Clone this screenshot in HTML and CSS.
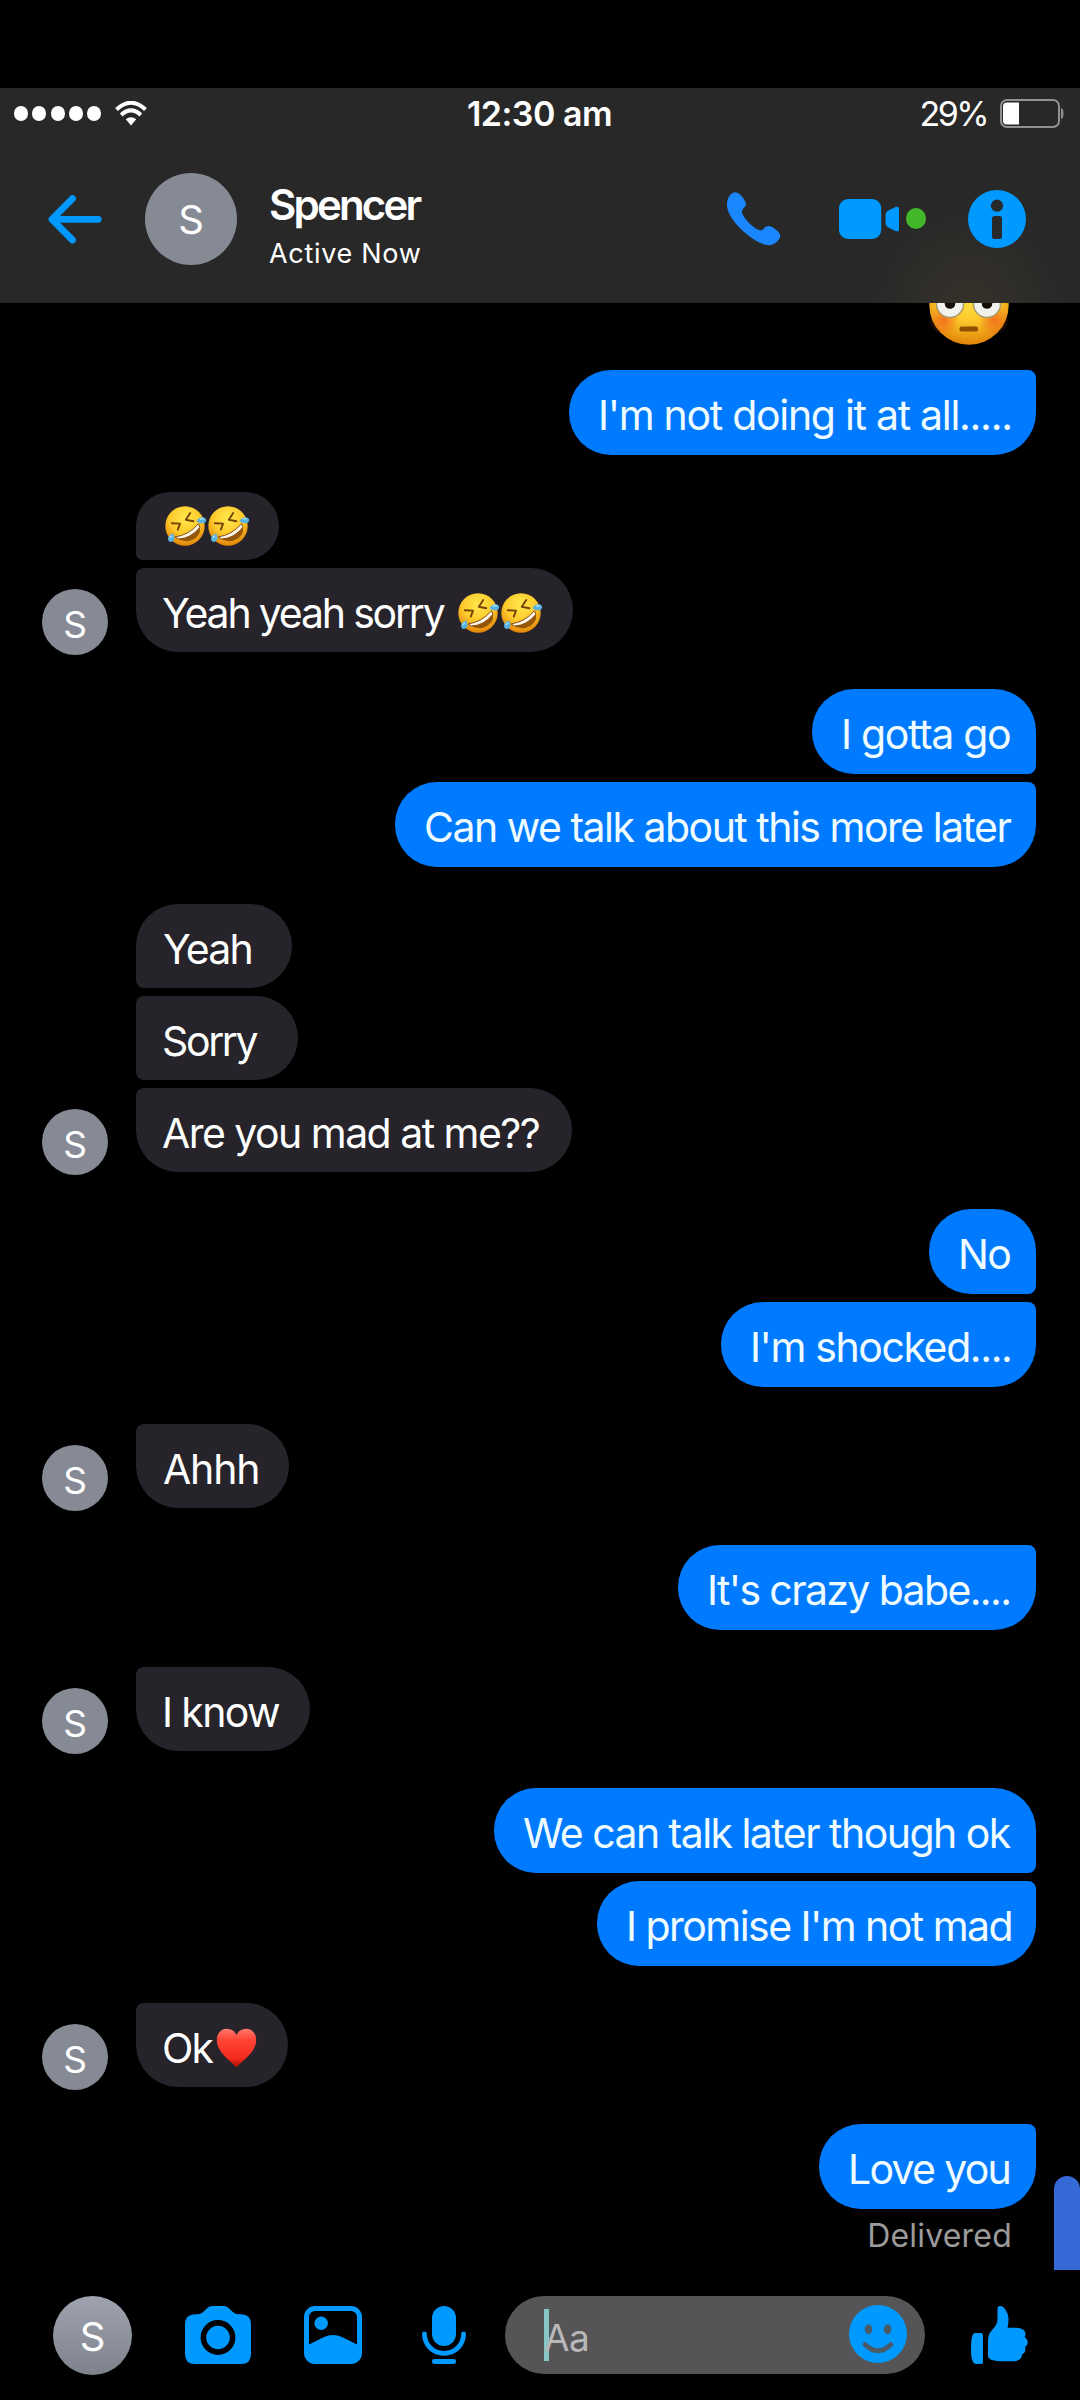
FILE: index.html
```html
<!DOCTYPE html>
<html lang="en">
<head>
<meta charset="utf-8">
<title>Spencer</title>
<link rel="stylesheet" href="styles.css">
</head>
<body>
<svg class="defs" aria-hidden="true">
  <defs>
    <radialGradient id="face" cx=".5" cy=".3" r=".72">
      <stop offset="0" stop-color="#ffe94e"/><stop offset=".55" stop-color="#fdc92b"/><stop offset="1" stop-color="#e07f06"/>
    </radialGradient>
    <radialGradient id="flush" cx=".5" cy=".5" r=".5">
      <stop offset="0" stop-color="#f4601d" stop-opacity=".75"/><stop offset="1" stop-color="#f4601d" stop-opacity="0"/>
    </radialGradient>
    <linearGradient id="heart" x1="0" y1="0" x2="0" y2="1">
      <stop offset="0" stop-color="#ff7a6e"/><stop offset=".3" stop-color="#ff4334"/><stop offset=".75" stop-color="#f52c1f"/><stop offset="1" stop-color="#a80d05"/>
    </linearGradient>
    <symbol id="rofl" viewBox="0 0 43 40">
      <circle cx="20" cy="20" r="19.7" fill="url(#face)"/>
      <path d="M6.8 17.2 15 17.6 12.8 23.6M25.2 7 20.8 13.8 28.4 15.2" fill="none" stroke="#764205" stroke-width="1.9" stroke-linecap="round" stroke-linejoin="round"/>
      <path d="M10 31Q24 29 33.6 17.6Q38 27 30 32.4Q20 38.500 10 31Z" fill="#96560a"/>
      <path d="M10 31Q24 29 33.600 17.600L34.8 21.400Q26 32.500 13.500 33Z" fill="#fff6ea" stroke="#7a4507" stroke-width=".9"/>
      <path d="M31.500 15.200Q34 10.800 38 11.300Q41.400 12 41.200 14.500Q40.500 17.600 36.500 17.300Q34 17 31.500 15.200Z" fill="#57b4e2"/>
      <path d="M8.600 27.600Q3.400 29 3 32.500Q3 35.800 6 35.900Q9 35.600 9.400 32.200Z" fill="#57b4e2"/>
      <path d="M35 13.500Q37 12.200 39 13M5 32Q5.500 30.500 7.200 29.800" fill="none" stroke="#b9e6f8" stroke-width="1.200"/>
    </symbol>
  </defs>
</svg>

<header class="header">
  <div class="status">
    <div class="signal">
      <i></i><i></i><i></i><i></i><i></i>
      <svg class="wifi" width="32" height="25" viewBox="0 0 32 25">
        <path d="M1.500 8.500Q16-5 30.500 8.500M6.200 13.900Q16 5 25.800 13.900" fill="none" stroke="#fff" stroke-width="4"/>
        <path d="M10.800 18.300Q16 14 21.200 18.300L16 24.400Z" fill="#fff"/>
      </svg>
    </div>
    <div class="clock">12:30 am</div>
    <div class="power">
      <span>29%</span>
      <svg width="64" height="29" viewBox="0 0 64 29">
        <rect x="1" y="1" width="58" height="27" rx="6" fill="none" stroke="#919191" stroke-width="2"/>
        <path d="M7 3.500H19V25.500H7Q3 25.500 3 21.500V7.500Q3 3.500 7 3.500Z" fill="#fff"/>
        <path d="M61.500 9.500Q63 10 63 14.500T61.500 19.500Z" fill="#919191" stroke="#919191"/>
      </svg>
    </div>
  </div>
  <div class="nav">
    <svg width="54" height="49" viewBox="0 0 54 49"><path d="M24.500 3.600 3.900 24.300 24.500 45M4 24.300H50.200" fill="none" stroke="#0099ff" stroke-width="6.800" stroke-linecap="round" stroke-linejoin="round"/></svg>
    <div class="avatar avatar-head">S</div>
    <div class="who">
      <div class="name">Spencer</div>
      <div class="presence">Active Now</div>
    </div>
    <svg class="phone" width="54" height="54" viewBox="0 0 54 54"><path d="M8.500.2C13 .2 19 9 19 12C19 15.500 14.500 16.500 15 20.500C16 26 28 38.200 33.500 38.200C37 38.200 37.500 34 41.500 34C45 34 53.200 40 53.200 43.500C53.200 48 47.500 53.200 42 53.200C29 53.200 0 29 0 13C0 5 4 .2 8.500.2Z" fill="#1a87ff"/></svg>
    <svg class="video" width="60" height="40" viewBox="0 0 60 40">
      <rect width="42.200" height="40" rx="9" fill="#0099ff"/>
      <path d="M48.500 12 57 7.800Q60 7 60 10.500V29.500Q60 33 57 32.200L48.500 28Q46.500 26.500 46.500 24V16Q46.500 13.500 48.500 12Z" fill="#0099ff"/>
    </svg>
    <i class="online"></i>
    <svg class="info" width="58" height="58" viewBox="0 0 58 58">
      <circle cx="29" cy="29" r="29" fill="#0099ff"/><circle cx="29" cy="15.700" r="6.100" fill="#28292a"/><rect x="24" y="26" width="10" height="23" rx="2.500" fill="#28292a"/>
    </svg>
  </div>
</header>

<main class="thread">
  <svg class="flushed" width="80" height="80" viewBox="0 0 80 80">
    <circle cx="40" cy="40" r="39.700" fill="url(#face)"/>
    <circle cx="15" cy="55" r="15" fill="url(#flush)"/><circle cx="65" cy="55" r="15" fill="url(#flush)"/>
    <circle cx="21" cy="39" r="13.500" fill="#f1f1ee" stroke="#a99a6a" stroke-width="1.500"/><circle cx="58" cy="39" r="13.500" fill="#f1f1ee" stroke="#a99a6a" stroke-width="1.500"/>
    <circle cx="21" cy="38.500" r="5.300" fill="#150d05"/><circle cx="58" cy="38.500" r="5.300" fill="#150d05"/>
    <rect x="30.500" y="61.500" width="18.500" height="5" rx="2" fill="#8f4f04"/>
  </svg>

  <section class="sent">
    <p class="bubble m-doing">I'm not doing it at all.....</p>
  </section>

  <section class="received">
    <div class="avatar avatar-small">S</div>
    <div class="stack">
      <p class="bubble emoji-only"><svg class="emoji"><use href="#rofl"/></svg><svg class="emoji"><use href="#rofl"/></svg></p>
      <p class="bubble m-yeahsorry"><span>Yeah yeah sorry</span><svg class="emoji"><use href="#rofl"/></svg><svg class="emoji"><use href="#rofl"/></svg></p>
    </div>
  </section>

  <section class="sent">
    <p class="bubble m-gotta">I gotta go</p>
    <p class="bubble m-talk">Can we talk about this more later</p>
  </section>

  <section class="received">
    <div class="avatar avatar-small">S</div>
    <div class="stack">
      <p class="bubble m-yeah">Yeah</p>
      <p class="bubble m-sorry">Sorry</p>
      <p class="bubble m-mad">Are you mad at me??</p>
    </div>
  </section>

  <section class="sent">
    <p class="bubble m-no">No</p>
    <p class="bubble m-shocked">I'm shocked....</p>
  </section>

  <section class="received">
    <div class="avatar avatar-small">S</div>
    <div class="stack"><p class="bubble m-ahhh">Ahhh</p></div>
  </section>

  <section class="sent">
    <p class="bubble m-crazy">It's crazy babe....</p>
  </section>

  <section class="received">
    <div class="avatar avatar-small">S</div>
    <div class="stack"><p class="bubble m-know">I know</p></div>
  </section>

  <section class="sent">
    <p class="bubble m-later">We can talk later though ok</p>
    <p class="bubble m-promise">I promise I'm not mad</p>
  </section>

  <section class="received">
    <div class="avatar avatar-small">S</div>
    <div class="stack"><p class="bubble m-ok"><span>Ok</span><svg class="heart" viewBox="0 0 41 40"><path d="M20.500 39.500C15 33 .8 24.500.8 12C.8 5 5.500.8 11 .8C15.500.8 19 3.500 20.500 7C22 3.500 25.500.8 30 .8C35.500.8 40.200 5 40.200 12C40.200 24.500 26 33 20.500 39.500Z" fill="url(#heart)"/></svg></p></div>
  </section>

  <section class="sent">
    <p class="bubble m-love">Love you</p>
  </section>
  <div class="delivered">Delivered</div>
  <div class="scrollbar"></div>
</main>

<footer class="composer">
  <div class="avatar avatar-self">S</div>
  <svg class="camera" width="66" height="58" viewBox="0 0 66 58">
    <path d="M10 8.300H12C20 8.300 20 0 28 0H38C46 0 46 8.300 54 8.300H56Q66 8.300 66 18.300V48Q66 58 56 58H10Q0 58 0 48V18.300Q0 8.300 10 8.300Z" fill="#0099ff"/>
    <circle cx="33" cy="31.500" r="14.600" fill="none" stroke="#000" stroke-width="5.600"/>
  </svg>
  <svg class="photo" width="58" height="58" viewBox="0 0 58 58">
    <rect x="2.500" y="2.500" width="53" height="53" rx="8.500" fill="none" stroke="#0099ff" stroke-width="5"/>
    <circle cx="17.200" cy="17.200" r="6.700" fill="#0099ff"/>
    <path d="M5 38.500 20 31Q29 27 38 31L53 38.500V56H5Z" fill="#0099ff"/>
  </svg>
  <svg class="mic" width="44" height="58" viewBox="0 0 44 58">
    <rect x="10" width="24" height="40" rx="12" fill="#0099ff"/>
    <path d="M2.400 27.800C2.400 39 11 47.300 22 47.300S41.600 39 41.600 27.800M12.300 55.500H31.700" fill="none" stroke="#0099ff" stroke-width="4.800" stroke-linecap="round"/>
  </svg>
  <div class="field">
    <i class="caret"></i>
    <span class="hint">Aa</span>
    <svg class="smile" width="58" height="58" viewBox="0 0 58 58">
      <circle cx="29" cy="29" r="29" fill="#0099ff"/>
      <ellipse cx="19.500" cy="24.300" rx="3.700" ry="5" fill="#4c5a66"/><ellipse cx="38.600" cy="24.300" rx="3.700" ry="5" fill="#4c5a66"/>
      <path d="M16 39.500Q29 52 42 39.500" fill="none" stroke="#4c5a66" stroke-width="4.600" stroke-linecap="round"/>
    </svg>
  </div>
  <svg class="thumb" width="57" height="58" viewBox="0 0 57 58">
    <path d="M4 27H10Q12 27 12 29.500V56Q12 58 10 58H5Q0 58 0 43Q0 27 4 27Z" fill="#0099ff"/>
    <path d="M17 36Q17 29 19.500 26C23 21.500 26.500 19 26.500 13V3Q26.500 0 29 0C34 0 37.500 8 37.500 13Q37.500 18 36.500 21.700H44Q54.500 21.700 54.500 28Q54.500 30 53.500 31Q56.700 33 56.700 36.500Q56.700 39.500 54 41Q55.500 46.500 51 48.500Q51 55.300 41 55.300H33Q17 55.300 17 50Z" fill="#0099ff"/>
  </svg>
</footer>
</body>
</html>
```
FILE: styles.css
```css
* { box-sizing: border-box; }
body {
  margin: 0;
  width: 1080px;
  height: 2400px;
  overflow: hidden;
  background: #000;
  color: #fff;
  font-family: Inter, "Liberation Sans", sans-serif;
  padding-top: 88px;
}
p { margin: 0; }
svg { display: block; flex: none; }
.defs { position: absolute; width: 0; height: 0; }

.header {
  height: 215px;
  background: radial-gradient(circle at 969px 215px, #34312a 0, #2f2d29 50px, #282828 96px);
}
.status {
  height: 50px;
  padding: 1px 16px 0 14px;
  display: grid;
  grid-template-columns: 1fr auto 1fr;
  align-items: center;
  font-size: 34px;
}
.signal { display: flex; align-items: center; gap: 4.300px; }
.signal i { width: 14px; height: 14.500px; border-radius: 50%; background: #fff; }
.wifi { margin-left: 10px; }
.clock { font-weight: 600; letter-spacing: -0.500px; margin-left: 1px; }
.power { display: flex; align-items: center; justify-content: flex-end; gap: 13px; }
.power span { letter-spacing: -2.600px; }

.nav { display: flex; align-items: center; height: 162px; padding-left: 48px; }
.avatar {
  flex: none;
  display: flex;
  align-items: center;
  justify-content: center;
  border-radius: 50%;
  background: #868a95;
}
.avatar-head { width: 92px; height: 92px; margin-left: 43px; padding-top: 1px; font-size: 40px; }
.who { width: 160px; margin: 16px 0 0 32px; white-space: nowrap; }
.name { font-size: 42px; font-weight: 600; line-height: 46px; letter-spacing: -2.800px; }
.presence { margin-top: 8px; font-size: 27px; line-height: 36px; letter-spacing: 0.700px; }
.phone { margin-left: 298px; }
.video { margin-left: 58px; }
.online { width: 20px; height: 21px; margin-left: 7px; border-radius: 50%; background: #43b72a; margin-top: -2px; }
.info { margin-left: 42px; }

.thread {
  position: relative;
  height: 1967px;
  overflow: hidden;
}
.flushed { margin: -38px 0 25px 929px; }
.sent, .stack { display: flex; flex-direction: column; gap: 8px; }
.sent { align-items: flex-end; padding-right: 44px; }
.received { display: flex; align-items: flex-end; margin: 37px 0; }
.avatar-small { width: 66px; height: 66px; margin: 0 28px -3px 42px; padding-top: 4px; font-size: 37px; }

.bubble {
  font-size: 41px;
  line-height: 91.500px;
  white-space: nowrap;
  border-radius: 42px;
}
.sent .bubble { height: 85px; padding-left: 29px; background: #007aff; color: #effcff; }
.sent .bubble:not(:first-child), .sent .bubble:last-child { border-top-right-radius: 8px; }
.sent .bubble:not(:last-child) { border-bottom-right-radius: 8px; }
.received .bubble { display: flex; height: 84px; padding-left: 27px; background: #26242a; }
.received .bubble:not(:first-child), .received .bubble:last-child { border-top-left-radius: 8px; }
.received .bubble:not(:last-child) { border-bottom-left-radius: 8px; }

.m-doing { width: 467px; letter-spacing: -1.290px; }
.m-gotta { width: 224px; letter-spacing: -1.330px; }
.m-talk { width: 641px; letter-spacing: -1.510px; }
.m-no { width: 107px; letter-spacing: -1.700px; }
.m-shocked { width: 315px; letter-spacing: -1.400px; }
.m-crazy { width: 358px; letter-spacing: -1.630px; }
.m-later { width: 542px; letter-spacing: -1.540px; }
.m-promise { width: 439px; letter-spacing: -1.540px; }
.m-love { width: 217px; letter-spacing: -1.700px; }
.m-yeahsorry { width: 437px; letter-spacing: -2.200px; }
.m-yeah { width: 156px; letter-spacing: -1.840px; }
.m-sorry { width: 162px; letter-spacing: -2.370px; }
.m-mad { width: 436px; letter-spacing: -1.540px; }
.m-ahhh { width: 153px; letter-spacing: -1.200px; }
.m-know { width: 174px; letter-spacing: -1.600px; }
.m-ok { width: 152px; letter-spacing: -1.800px; }
.received .m-yeahsorry, .received .m-sorry, .received .m-mad, .received .m-know, .received .m-ok { padding-left: 26px; }

.emoji { width: 43px; height: 40px; }
.received .emoji-only { width: 143px; height: 68px; align-items: center; padding-left: 29px; }
.m-yeahsorry span { width: 296px; }
.m-yeahsorry .emoji { margin-top: 25px; }
.m-ok span { width: 54px; }
.heart { width: 41px; height: 40px; margin-top: 25px; }

.delivered {
  padding: 7px 68px 0 0;
  text-align: right;
  font-size: 32px;
  line-height: 40px;
  letter-spacing: 0.200px;
  color: #9b9b9b;
}
.scrollbar {
  position: absolute;
  right: 0;
  bottom: 0;
  width: 26px;
  height: 94px;
  border-radius: 13px 13px 0 0;
  background: #3569d6;
}

.composer { display: flex; align-items: center; height: 130px; padding-left: 53px; }
.avatar-self { width: 79px; height: 79px; padding-top: 3px; font-size: 40px; background: linear-gradient(#9ea3af, #7e828c); }
.camera { margin-left: 53px; }
.photo { margin-left: 53px; }
.mic { margin-left: 60px; }
.field {
  display: flex;
  align-items: center;
  width: 420px;
  height: 78px;
  margin-left: 39px;
  padding-left: 39px;
  border-radius: 39px;
  background: #555557;
}
.caret { width: 5px; height: 52px; background: #86c7c5; }
.hint { margin: 4px 0 0 -5px; font-size: 37px; letter-spacing: -0.500px; color: #b8b8b9; }
.smile { margin: -2px 0 0 auto; margin-right: 18px; }
.thumb { margin-left: 46px; }
```
